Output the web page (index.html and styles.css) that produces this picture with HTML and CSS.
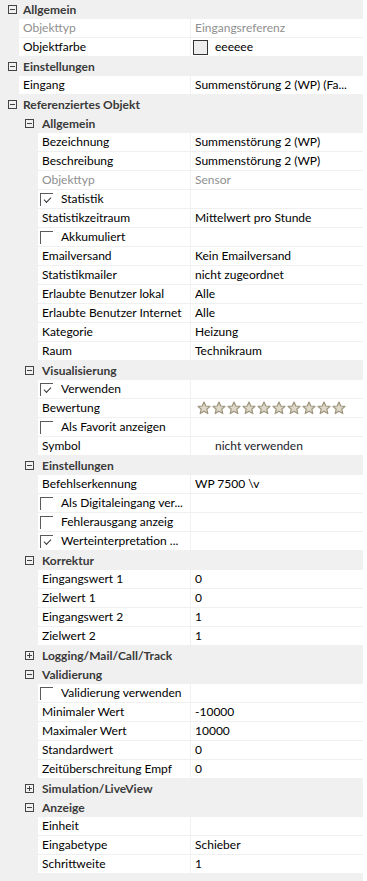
FILE: index.html
```html
<!DOCTYPE html>
<html lang="de">
<head>
    <meta charset="UTF-8">
    <meta name="viewport" content="width=device-width, initial-scale=1.0">
    <title>Eigenschaften</title>
    <link rel="stylesheet" href="styles.css">
</head>
<body>

<div class="grid">
    <div class="cat l0"><svg class="exp" viewBox="0 0 9 9"><rect x="0.5" y="0.5" width="8" height="8"/><line x1="2" y1="4.5" x2="7" y2="4.5"/></svg>Allgemein</div>
    <div class="prop l0"><div class="name dis">Objekttyp</div><div class="val dis">Eingangsreferenz</div></div>
    <div class="prop l0"><div class="name">Objektfarbe</div><div class="val color"><span class="swatch"></span>eeeeee</div></div>

    <div class="cat l0"><svg class="exp" viewBox="0 0 9 9"><rect x="0.5" y="0.5" width="8" height="8"/><line x1="2" y1="4.5" x2="7" y2="4.5"/></svg>Einstellungen</div>
    <div class="prop l0"><div class="name">Eingang</div><div class="val">Summenstörung 2 (WP) (Fa...</div></div>

    <div class="cat l0"><svg class="exp" viewBox="0 0 9 9"><rect x="0.5" y="0.5" width="8" height="8"/><line x1="2" y1="4.5" x2="7" y2="4.5"/></svg>Referenziertes Objekt</div>

    <div class="cat l1"><svg class="exp" viewBox="0 0 9 9"><rect x="0.5" y="0.5" width="8" height="8"/><line x1="2" y1="4.5" x2="7" y2="4.5"/></svg>Allgemein</div>
    <div class="prop l1"><div class="name">Bezeichnung</div><div class="val">Summenstörung 2 (WP)</div></div>
    <div class="prop l1"><div class="name">Beschreibung</div><div class="val">Summenstörung 2 (WP)</div></div>
    <div class="prop l1"><div class="name dis">Objekttyp</div><div class="val dis">Sensor</div></div>
    <div class="prop l1"><div class="name check"><span class="box on"></span>Statistik</div><div class="val"></div></div>
    <div class="prop l1"><div class="name">Statistikzeitraum</div><div class="val">Mittelwert pro Stunde</div></div>
    <div class="prop l1"><div class="name check"><span class="box"></span>Akkumuliert</div><div class="val"></div></div>
    <div class="prop l1"><div class="name">Emailversand</div><div class="val">Kein Emailversand</div></div>
    <div class="prop l1"><div class="name">Statistikmailer</div><div class="val">nicht zugeordnet</div></div>
    <div class="prop l1"><div class="name">Erlaubte Benutzer lokal</div><div class="val">Alle</div></div>
    <div class="prop l1"><div class="name">Erlaubte Benutzer Internet</div><div class="val">Alle</div></div>
    <div class="prop l1"><div class="name">Kategorie</div><div class="val">Heizung</div></div>
    <div class="prop l1"><div class="name">Raum</div><div class="val">Technikraum</div></div>

    <div class="cat l1"><svg class="exp" viewBox="0 0 9 9"><rect x="0.5" y="0.5" width="8" height="8"/><line x1="2" y1="4.5" x2="7" y2="4.5"/></svg>Visualisierung</div>
    <div class="prop l1"><div class="name check"><span class="box on"></span>Verwenden</div><div class="val"></div></div>
    <div class="prop l1"><div class="name">Bewertung</div><div class="val stars" id="stars"></div></div>
    <div class="prop l1"><div class="name check"><span class="box"></span>Als Favorit anzeigen</div><div class="val"></div></div>
    <div class="prop l1"><div class="name">Symbol</div><div class="val symbol">nicht verwenden</div></div>

    <div class="cat l1"><svg class="exp" viewBox="0 0 9 9"><rect x="0.5" y="0.5" width="8" height="8"/><line x1="2" y1="4.5" x2="7" y2="4.5"/></svg>Einstellungen</div>
    <div class="prop l1"><div class="name">Befehlserkennung</div><div class="val">WP 7500 \v</div></div>
    <div class="prop l1"><div class="name check"><span class="box"></span>Als Digitaleingang ver...</div><div class="val"></div></div>
    <div class="prop l1"><div class="name check"><span class="box"></span>Fehlerausgang anzeig</div><div class="val"></div></div>
    <div class="prop l1"><div class="name check"><span class="box on"></span>Werteinterpretation ...</div><div class="val"></div></div>

    <div class="cat l1"><svg class="exp" viewBox="0 0 9 9"><rect x="0.5" y="0.5" width="8" height="8"/><line x1="2" y1="4.5" x2="7" y2="4.5"/></svg>Korrektur</div>
    <div class="prop l1"><div class="name">Eingangswert 1</div><div class="val">0</div></div>
    <div class="prop l1"><div class="name">Zielwert 1</div><div class="val">0</div></div>
    <div class="prop l1"><div class="name">Eingangswert 2</div><div class="val">1</div></div>
    <div class="prop l1"><div class="name">Zielwert 2</div><div class="val">1</div></div>

    <div class="cat l1"><svg class="exp" viewBox="0 0 9 9"><rect x="0.5" y="0.5" width="8" height="8"/><line x1="2" y1="4.5" x2="7" y2="4.5"/><line x1="4.5" y1="2" x2="4.5" y2="7"/></svg>Logging/Mail/Call/Track</div>

    <div class="cat l1"><svg class="exp" viewBox="0 0 9 9"><rect x="0.5" y="0.5" width="8" height="8"/><line x1="2" y1="4.5" x2="7" y2="4.5"/></svg>Validierung</div>
    <div class="prop l1"><div class="name check"><span class="box"></span>Validierung verwenden</div><div class="val"></div></div>
    <div class="prop l1"><div class="name">Minimaler Wert</div><div class="val">-10000</div></div>
    <div class="prop l1"><div class="name">Maximaler Wert</div><div class="val">10000</div></div>
    <div class="prop l1"><div class="name">Standardwert</div><div class="val">0</div></div>
    <div class="prop l1"><div class="name">Zeitüberschreitung Empf</div><div class="val">0</div></div>

    <div class="cat l1"><svg class="exp" viewBox="0 0 9 9"><rect x="0.5" y="0.5" width="8" height="8"/><line x1="2" y1="4.5" x2="7" y2="4.5"/><line x1="4.5" y1="2" x2="4.5" y2="7"/></svg>Simulation/LiveView</div>

    <div class="cat l1"><svg class="exp" viewBox="0 0 9 9"><rect x="0.5" y="0.5" width="8" height="8"/><line x1="2" y1="4.5" x2="7" y2="4.5"/></svg>Anzeige</div>
    <div class="prop l1"><div class="name">Einheit</div><div class="val"></div></div>
    <div class="prop l1"><div class="name">Eingabetype</div><div class="val">Schieber</div></div>
    <div class="prop l1"><div class="name">Schrittweite</div><div class="val">1</div></div>
</div>
<div class="scrollbar"></div>

<script>
    // 10 empty rating stars
    var star = '<svg class="star" viewBox="0 0 14 14"><polygon points="7,1 8.8,5 13,5.4 9.8,8.2 10.8,12.6 7,10.3 3.2,12.6 4.2,8.2 1,5.4 5.2,5"/></svg>';
    var html = '';
    for (var i = 0; i < 10; i++) {
        html += star;
    }
    document.getElementById('stars').innerHTML = html;
</script>

</body>
</html>
```

FILE: styles.css
```css
body {
    margin: 0;
    display: flex;
    background-color: #f0f0f0;
    font-family: Lato, "Noto Sans", sans-serif;
    font-size: 12px;
    color: #000;
    min-height: 881px;
}

.grid {
    flex: 0 0 363px;
}

.scrollbar {
    flex: 0 0 4px;
    background-color: #fff;
}

.cat {
    height: 19px;
    display: flex;
    align-items: center;
    font-weight: bold;
    color: #3a3a3a;
}

.cat.l0 {
    padding-left: 8px;
}

.cat.l1 {
    padding-left: 25px;
}

.exp {
    width: 9px;
    height: 9px;
    margin-right: 8px;
    fill: none;
    stroke: #444;
    stroke-width: 1;
    shape-rendering: crispEdges;
}

.cat.l0 .exp {
    margin-right: 6px;
}

.prop {
    display: flex;
    height: 18px;
    margin-bottom: 1px;
    line-height: 18px;
}

.prop.l0 {
    padding-left: 19px;
}

.prop.l1 {
    padding-left: 38px;
}

.name, .val {
    background-color: #fff;
    padding-left: 4px;
    box-sizing: border-box;
    white-space: nowrap;
    overflow: hidden;
}

.prop.l0 .name {
    flex: 0 0 171px;
}

.prop.l1 .name {
    flex: 0 0 152px;
}

.val {
    flex: 1;
    margin-left: 1px;
}

.dis {
    color: #8f8f8f;
}

.check {
    display: flex;
    align-items: center;
    padding-left: 2px;
}

.box {
    width: 12px;
    height: 12px;
    border-left: 1px solid #5a5a5a;
    border-top: 1px solid #5a5a5a;
    margin-right: 8px;
    position: relative;
}

.box.on::after {
    content: '';
    position: absolute;
    left: 3px;
    top: 3px;
    width: 6px;
    height: 3px;
    border-left: 1px solid #333;
    border-bottom: 1px solid #333;
    transform: rotate(-45deg);
}

.color {
    display: flex;
    align-items: center;
    padding-left: 2px;
}

.swatch {
    width: 13px;
    height: 13px;
    border: 1px solid #333;
    background-color: #eeeeee;
    margin-right: 7px;
}

.stars {
    display: flex;
    align-items: center;
    padding-left: 6px;
}

.star {
    width: 14px;
    height: 14px;
    margin-right: 1px;
    fill: #ddd8c8;
    stroke: #9c947d;
    stroke-width: 1.2;
    stroke-linejoin: round;
}

.symbol {
    padding-left: 24px;
    color: #1a1a2a;
}
```
